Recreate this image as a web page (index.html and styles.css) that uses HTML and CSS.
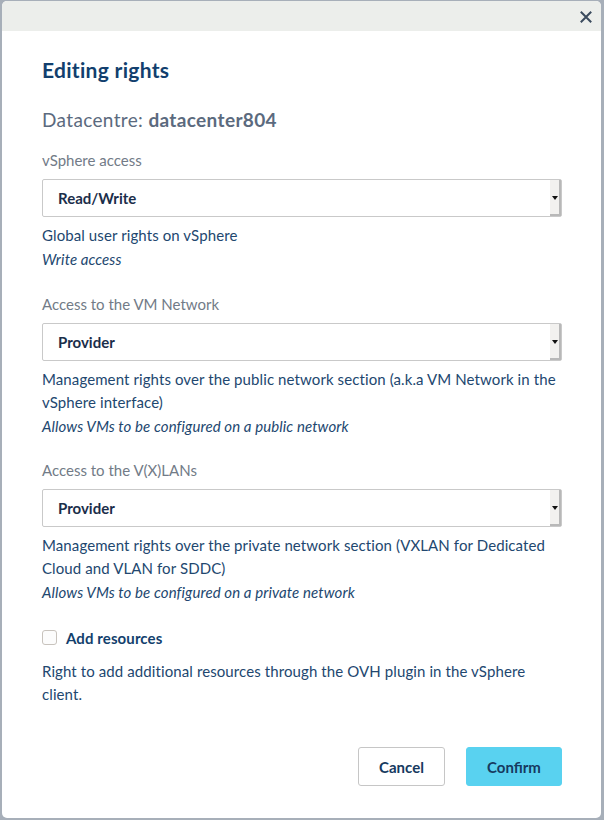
FILE: index.html
```html
<!DOCTYPE html>
<html lang="en">
<head>
<meta charset="utf-8">
<title>Editing rights</title>
<link rel="stylesheet" href="styles.css">
</head>
<body>
<div class="modal">
  <div class="modal-header">
    <button class="close" aria-label="Close">
      <svg width="12" height="12" viewBox="0 0 12 12"><path d="M0.8 0.8 L11.2 11.2 M11.2 0.8 L0.8 11.2" stroke="#3b4b5e" stroke-width="2" fill="none"/></svg>
    </button>
  </div>
  <div class="modal-body">
    <h2 class="title">Editing rights</h2>
    <h3 class="subtitle">Datacentre: <strong>datacenter804</strong></h3>

    <div class="field">
      <div class="label">vSphere access</div>
      <div class="select"><span class="value">Read/Write</span><span class="arrow"></span></div>
      <div class="desc">
        <p>Global user rights on vSphere</p>
        <p class="em">Write access</p>
      </div>
    </div>

    <div class="field">
      <div class="label">Access to the VM Network</div>
      <div class="select"><span class="value">Provider</span><span class="arrow"></span></div>
      <div class="desc">
        <p>Management rights over the public network section (a.k.a VM Network in the vSphere interface)</p>
        <p class="em">Allows VMs to be configured on a public network</p>
      </div>
    </div>

    <div class="field">
      <div class="label">Access to the V(X)LANs</div>
      <div class="select"><span class="value">Provider</span><span class="arrow"></span></div>
      <div class="desc">
        <p>Management rights over the private network section (VXLAN for Dedicated Cloud and VLAN for SDDC)</p>
        <p class="em">Allows VMs to be configured on a private network</p>
      </div>
    </div>

    <label class="check">
      <span class="box"></span>
      <span class="check-label">Add resources</span>
    </label>
    <p class="note">Right to add additional resources through the OVH plugin in the vSphere client.</p>

    <div class="actions">
      <button class="btn btn-cancel">Cancel</button>
      <button class="btn btn-confirm">Confirm</button>
    </div>
  </div>
</div>
</body>
</html>
```

FILE: styles.css
```css
* { box-sizing: border-box; }
html, body { margin: 0; padding: 0; }
body {
  background: #a7afb9;
  font-family: "Lato", "Open Sans", sans-serif;
  font-size: 15px;
  padding: 1px 3px 2px 2px;
}
.modal {
  background: #fff;
  border-radius: 5px;
  overflow: hidden;
  height: 817px;
  display: flex;
  flex-direction: column;
}
.modal-header {
  height: 30px;
  background: #eceeeb;
  display: flex;
  justify-content: flex-end;
  align-items: center;
  padding-right: 9px;
  padding-top: 1px;
}
.close {
  border: 0;
  background: transparent;
  padding: 0;
  width: 12px;
  height: 12px;
  display: flex;
}
.modal-body {
  padding: 27px 40px 0 40px;
  display: flex;
  flex-direction: column;
}
.title {
  margin: 0;
  font-size: 21px;
  line-height: 24px;
  font-weight: 700;
  letter-spacing: 0.3px;
  color: #123f6e;
}
.subtitle {
  margin: 27px 0 0;
  font-size: 19px;
  line-height: 22px;
  font-weight: 400;
  letter-spacing: 0.35px;
  color: #5b6a7e;
}
.subtitle strong { font-weight: 700; }
.field { margin-top: 19px; }
.field + .field { margin-top: 22.5px; }
.label {
  line-height: 20px;
  color: #727b87;
  margin-bottom: 9px;
}
.select {
  height: 38px;
  border: 1px solid #c9c9c9;
  border-radius: 2px;
  display: flex;
  align-items: stretch;
  margin-right: -1px;
}
.value {
  flex: 1;
  display: flex;
  align-items: center;
  padding-left: 15px;
  font-weight: 700;
  color: #1b2e4a;
}
.arrow {
  width: 11px;
  background: #f2f1ef;
  box-shadow: inset -2px -2px 0 #b8b8b8;
  position: relative;
}
.arrow::after {
  content: "";
  position: absolute;
  left: 2px;
  top: 16px;
  border-left: 3px solid transparent;
  border-right: 3px solid transparent;
  border-top: 4px solid #111;
}
.desc { margin-top: 7px; color: #22476f; line-height: 23px; letter-spacing: 0.1px; }
.desc p { margin: 0; }
.em { font-style: italic; margin-top: 1px !important; }
.check {
  margin-top: 22px;
  display: flex;
  align-items: center;
  height: 23px;
}
.box {
  width: 15px;
  height: 15px;
  border: 1px solid #c8c3bd;
  border-radius: 3px;
  background: #fcfcfc;
  margin-right: 9px;
}
.check-label { font-weight: 700; color: #133f6d; letter-spacing: 0.1px; }
.note { margin: 11px 0 0; color: #22476f; line-height: 23px; letter-spacing: 0.1px; }
.actions {
  margin-top: 41px;
  display: flex;
  justify-content: flex-end;
  gap: 21px;
  margin-right: -1px;
}
.btn {
  height: 39px;
  border-radius: 3px;
  font-family: inherit;
  font-size: 15px;
  font-weight: 700;
  color: #163a60;
  padding: 0;
}
.btn-cancel { width: 87px; background: #fff; border: 1px solid #c6c6c6; }
.btn-confirm { width: 96px; background: #59d2f0; border: 1px solid #59d2f0; }
```
